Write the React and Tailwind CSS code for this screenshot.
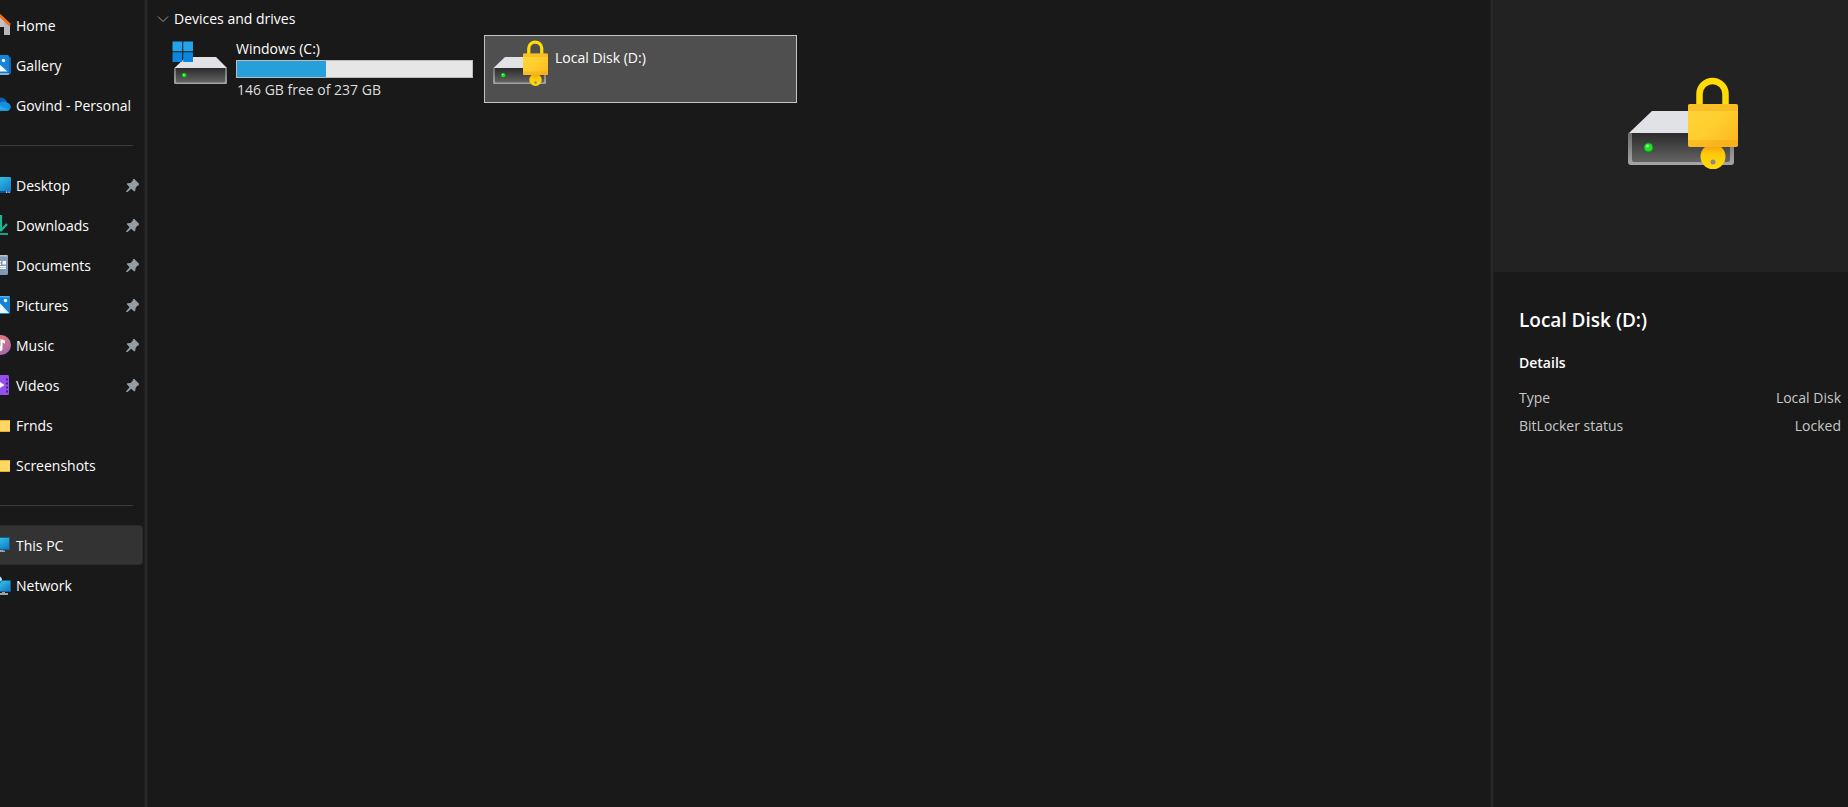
import { useId, useState } from "react";

const HomeIcon = () => (
  <svg width="24" height="24" viewBox="0 0 24 24">
    <path d="M3 11l9-8 10 9v11h-6v-8H9v8H3z" fill="#c4c4c6" />
    <path d="M16 23h6V12l-6-5z" fill="#a9a9ab" fillOpacity="0.500" />
    <path d="M1.500 13L12 3.500 22 13" fill="none" stroke="#ef6c1a" strokeWidth="2.800" strokeLinejoin="round" />
  </svg>
);

const GalleryIcon = () => (
  <svg width="24" height="24" viewBox="0 0 24 24">
    <rect x="6" y="4.500" width="17" height="18" rx="2" fill="#1267b8" />
    <path d="M4 21h17.500l-1 2H5z" fill="#7fb2e6" />
    <rect x="2" y="3" width="19" height="17.500" rx="1.500" fill="#1583d6" />
    <circle cx="15.500" cy="8.500" r="1.700" fill="#fff" />
    <path d="M2 19.500l7-9.500 10.500 9.500z" fill="#eef6ff" />
  </svg>
);

const CloudIcon = () => (
  <svg width="24" height="24" viewBox="0 0 24 24">
    <path d="M4 16a6 6 0 0 1 4-9 7 7 0 0 1 11 3l-6 5z" fill="#0a5fb5" />
    <path d="M10 12.500c3-3.500 7-4 10-1.500 3 1 4 6 .5 7.500H8z" fill="#1490df" />
    <path d="M3 16.500c3-4 8-4.500 11-1.500l7 3a4 4 0 0 1-2 .7H6a3 3 0 0 1-3-2.200z" fill="#28a8ea" />
  </svg>
);

const DesktopIcon = () => (
  <svg width="24" height="24" viewBox="0 0 24 24">
    <defs>
      <linearGradient id="desk" x1="0" y1="0" x2="1" y2="1">
        <stop offset="0" stopColor="#3bd9ea" />
        <stop offset="1" stopColor="#1273c9" />
      </linearGradient>
    </defs>
    <rect x="1" y="5" width="22" height="15.500" rx="1" fill="url(#desk)" />
    <path d="M1 19h22v1.500H1z" fill="#0d4f8a" />
    <path d="M18 19.500h1.200v1.200H18zM20.500 19.500h1.200v1.200h-1.200z" fill="#fff" />
  </svg>
);

const DownloadIcon = () => (
  <svg width="24" height="24" viewBox="0 0 24 24" fill="none" strokeWidth="2">
    <path d="M4 22h16" stroke="#17a08c" />
    <path d="M13 3v15M6.500 12l6.500 6.500 6-6.500" stroke="#1fb590" strokeWidth="2.200" />
  </svg>
);

const DocumentIcon = () => (
  <svg width="24" height="24" viewBox="0 0 24 24">
    <rect x="4" y="3" width="16" height="20" rx="1.500" fill="#8099b5" />
    <path d="M5.500 3h13A1.500 1.500 0 0 1 20 4.500H4A1.500 1.500 0 0 1 5.500 3z" fill="#b4c3d4" />
    <path d="M14.500 9H18v3.500h-3.500zM7 9h6v1.400H7zM7 11.500h6v1.400H7zM7 14h11v1.400H7zM7 16h11v1H7z" fill="#fff" />
  </svg>
);

const PictureIcon = () => (
  <svg width="24" height="24" viewBox="0 0 24 24">
    <rect x="2" y="4" width="20" height="18" rx="1.500" fill="#1583d6" />
    <path d="M2 5.500A1.500 1.500 0 0 1 3.500 4h17A1.500 1.500 0 0 1 22 5.500z" fill="#4db4ee" />
    <circle cx="17.500" cy="8.500" r="1.700" fill="#fff" />
    <path d="M2 21l8.500-11.500L21 21z" fill="#eef6ff" />
  </svg>
);

const MusicIcon = () => (
  <svg width="24" height="24" viewBox="0 0 24 24">
    <defs>
      <linearGradient id="music" x1="0" y1="0" x2="0.500" y2="1">
        <stop offset="0" stopColor="#f08060" />
        <stop offset="1" stopColor="#a869b0" />
      </linearGradient>
    </defs>
    <circle cx="13" cy="13" r="10" fill="url(#music)" />
    <path d="M12.500 7L17 8.500v3.200L14.500 10.600v6a2.500 2.500 0 1 1-2-2.400z" fill="#fff" />
  </svg>
);

const VideoIcon = () => (
  <svg width="24" height="24" viewBox="0 0 24 24">
    <rect x="2" y="3" width="19" height="20" rx="1.500" fill="#9450ec" />
    <path d="M18 6.500h2v2h-2zM18 10.500h2v2h-2zM18 14.500h2v2h-2zM18 18.500h2v2h-2z" fill="#4d1d96" />
    <path d="M10 8.500l6.500 4.500-6.500 4.500z" fill="#fff" />
  </svg>
);

const FolderIcon = () => (
  <svg width="24" height="24" viewBox="0 0 24 24">
    <path d="M2 8h20v12H2z" fill="#fdd663" />
    <path d="M2 8h20v1H2zM2 19h20v1H2z" fill="#eda92b" />
  </svg>
);

const MonitorIcon = () => (
  <svg width="24" height="24" viewBox="0 0 24 24">
    <path d="M9 17h6v3H9zM6 18.500h11V20H6z" fill="#9aa4ad" />
    <rect x="1" y="5" width="21" height="13" rx="1" fill="#155f8f" />
    <rect x="2" y="6" width="19" height="11" fill="url(#desk)" />
  </svg>
);

const NetworkIcon = () => (
  <svg width="24" height="24" viewBox="0 0 24 24">
    <path d="M14 19h3v3h-3zM11 21h9v2h-9z" fill="#9aa4ad" />
    <rect x="5" y="8" width="18" height="12" rx="1" fill="#155f8f" />
    <rect x="6" y="9" width="16" height="10" fill="url(#desk)" />
    <circle cx="10" cy="8" r="4" fill="#3d7c9c" />
    <path d="M10 4a5 5 0 0 1 4 4l-2 1-3-3z" fill="#d5e6ee" />
  </svg>
);

const PinIcon = () => (
  <svg width="13" height="13" viewBox="0 0 13 13" fill="#929da5">
    <path d="M7.300 0H8.300L13 4.800 12.800 6.200 11 7 9.500 9.300 9.300 11.800 8.200 12.600 5.200 9.700 1.500 12.900.200 13 .300 11.900 3.600 8.200.800 5.300 1.300 4.200 4.500 3.900 6.500 2.100z" />
  </svg>
);

const WindowsLogo = () => (
  <>
    <path d="M0 0h10v10H0zM11 0h10v10H11z" fill="#22a3ea" />
    <path d="M0 11h10v10H0zM11 11h10v10H11z" fill="#0c85dc" />
  </>
);

const Drive = ({ locked, windows, className }) => {
  const id = useId();
  return (
    <svg className={className} viewBox="0 0 112 96">
      <defs>
        <linearGradient id={`${id}body`} x1="0" y1="0" x2="0" y2="1">
          <stop offset="0" stopColor="#2b2b2b" />
          <stop offset="1" stopColor="#636363" />
        </linearGradient>
        <linearGradient id={`${id}edge`} x1="0" y1="0" x2="0" y2="1">
          <stop offset="0" stopColor="#6c6c6c" />
          <stop offset="1" stopColor="#a6a6a6" />
        </linearGradient>
        <linearGradient id={`${id}lock`} x1="0" y1="0" x2="1" y2="1">
          <stop offset="0" stopColor="#ffd43a" />
          <stop offset="0.500" stopColor="#ffce2e" />
          <stop offset="1" stopColor="#fbb51c" />
        </linearGradient>
        <linearGradient id={`${id}key`} x1="0" y1="0" x2="0" y2="1">
          <stop offset="0" stopColor="#f3a70b" />
          <stop offset="0.300" stopColor="#ffc90c" />
          <stop offset="1" stopColor="#ffdc05" />
        </linearGradient>
      </defs>
      <path d="M24 34h60l22 22v2H1v-2z" fill="#e1e2e6" />
      <path d="M0 56h106v29q0 3-3 3H3q-3 0-3-3z" fill={`url(#${id}edge)`} />
      <path d="M4 56h98v27q0 2-2 2H6q-2 0-2-2z" fill={`url(#${id}body)`} />
      <circle cx="20.500" cy="70.500" r="5" fill="#1a7a24" />
      <circle cx="20.500" cy="70.500" r="4" fill="#1be324" />
      <circle cx="19.500" cy="69" r="1.500" fill="#a8ff9a" />
      {windows && (
        <g transform="translate(-3 3) scale(1.950)">
          <WindowsLogo />
        </g>
      )}
      {locked && (
        <>
          <path d="M71.500 30V17a13 13 0 0 1 26 0v13" fill="none" stroke="#ffdc05" strokeWidth="6.500" />
          <rect x="60" y="27" width="50" height="43" rx="2" fill={`url(#${id}lock)`} />
          <path d="M62 27h46q2 0 2 2v5H60v-5q0-2 2-2zM60 63h50v5q0 2-2 2H62q-2 0-2-2z" fill="#f5a314" fillOpacity="0.400" />
          <path d="M77 70h16a12.500 12.500 0 1 1-16 0z" fill={`url(#${id}key)`} />
          <circle cx="85" cy="85" r="2.500" fill="#8d8a80" />
        </>
      )}
    </svg>
  );
};

const places = [
  { name: "Home", icon: HomeIcon },
  { name: "Gallery", icon: GalleryIcon },
  { name: "Govind - Personal", icon: CloudIcon },
];

const quickAccess = [
  { name: "Desktop", icon: DesktopIcon, pinned: true },
  { name: "Downloads", icon: DownloadIcon, pinned: true },
  { name: "Documents", icon: DocumentIcon, pinned: true },
  { name: "Pictures", icon: PictureIcon, pinned: true },
  { name: "Music", icon: MusicIcon, pinned: true },
  { name: "Videos", icon: VideoIcon, pinned: true },
  { name: "Frnds", icon: FolderIcon },
  { name: "Screenshots", icon: FolderIcon },
];

const computer = [
  { name: "This PC", icon: MonitorIcon },
  { name: "Network", icon: NetworkIcon },
];

const NavGroup = ({ items, current, onSelect }) => (
  <ul>
    {items.map(({ name, icon: Icon, pinned }) => (
      <li key={name}>
        <button
          type="button"
          onClick={() => onSelect(name)}
          className={`flex h-10 w-full items-center rounded-r-sm border-y border-r pr-[3px] text-left ${
            current === name ? "border-[#2a2a2a] bg-[#333333]" : "border-transparent"
          }`}
        >
          <span className="flex w-4 shrink-0 justify-end">
            <span className="shrink-0 pr-1 pb-0.5">
              <Icon />
            </span>
          </span>
          <span className="flex-1 pt-0.5 whitespace-nowrap">{name}</span>
          {pinned && <PinIcon />}
        </button>
      </li>
    ))}
  </ul>
);

const Divider = () => (
  <div className="flex h-10 items-center pr-2.5">
    <hr className="w-full border-[#3a3a3a]" />
  </div>
);

const Splitter = () => <div className="w-1 shrink-0 border-x border-[#1f1f1f] bg-[#282828]" />;

const DriveTile = ({ selected, onSelect, children }) => (
  <button
    type="button"
    onClick={onSelect}
    className={`flex h-[68px] w-[313px] items-start border pt-1 pr-1 pl-2 text-left ${
      selected ? "border-[#c4c4c4] bg-[#4f4f4f]" : "border-transparent"
    }`}
  >
    {children}
  </button>
);

const App = () => {
  const [current, setCurrent] = useState("This PC");
  const [drive, setDrive] = useState("D");
  const [open, setOpen] = useState(true);

  return (
    <div className="flex min-h-screen overflow-hidden bg-[#191919] font-['Open_Sans',sans-serif] text-sm text-white">
      <nav className="w-36 shrink-0 overflow-hidden pt-[5px] pr-px">
        <NavGroup items={places} current={current} onSelect={setCurrent} />
        <Divider />
        <NavGroup items={quickAccess} current={current} onSelect={setCurrent} />
        <Divider />
        <NavGroup items={computer} current={current} onSelect={setCurrent} />
      </nav>
      <Splitter />

      <main className="min-w-0 flex-1 px-2 pt-[9px]">
        <button type="button" onClick={() => setOpen(!open)} className="flex items-center gap-1">
          <svg width="14" height="14" viewBox="0 0 14 14" fill="none" stroke="#9a9a9a">
            <path d="M2 4.500l5 5 5-5" />
          </svg>
          Devices and drives
        </button>
        {open && (
          <div className="mt-1.5 flex gap-1.5 pl-[9px]">
            <DriveTile selected={drive === "C"} onSelect={() => setDrive("C")}>
              <Drive windows className="h-12 w-14 shrink-0 overflow-visible" />
              <span className="flex flex-1 flex-col pl-1.5">
                <span className="pt-px pb-[3px] leading-4">Windows (C:)</span>
                <span className="h-[18px] border border-[#bcbcbc] bg-[#e6e6e6]">
                  <span
                    className="block h-full bg-[#26a0da]"
                    style={{ width: `${Math.floor((1 - 146 / 237) * 100)}%` }}
                  />
                </span>
                <span className="pt-0.5 pl-px text-[#dedede]">146 GB free of 237 GB</span>
              </span>
            </DriveTile>
            <DriveTile selected={drive === "D"} onSelect={() => setDrive("D")}>
              <Drive locked className="h-12 w-14 shrink-0 overflow-visible" />
              <span className="pt-2 pl-1.5">Local Disk (D:)</span>
            </DriveTile>
          </div>
        )}
      </main>

      <Splitter />
      <aside className="w-[354px] shrink-0">
        <div className="flex h-[272px] items-center justify-center bg-[#222222] pb-[22px] pl-[26px]">
          <Drive locked className="h-24 w-28 overflow-visible" />
        </div>
        <div className="pt-9 pr-[7px] pl-[25px]">
          <h2 className="text-[19px] leading-6 font-semibold">Local Disk (D:)</h2>
          <h3 className="mt-[21px] font-semibold">Details</h3>
          <dl className="mt-[11px] text-[#c8c8c8]">
            <div className="flex h-7 items-center justify-between">
              <dt>Type</dt>
              <dd>Local Disk</dd>
            </div>
            <div className="flex h-7 items-center justify-between">
              <dt>BitLocker status</dt>
              <dd>Locked</dd>
            </div>
          </dl>
        </div>
      </aside>
    </div>
  );
};

export default App;
